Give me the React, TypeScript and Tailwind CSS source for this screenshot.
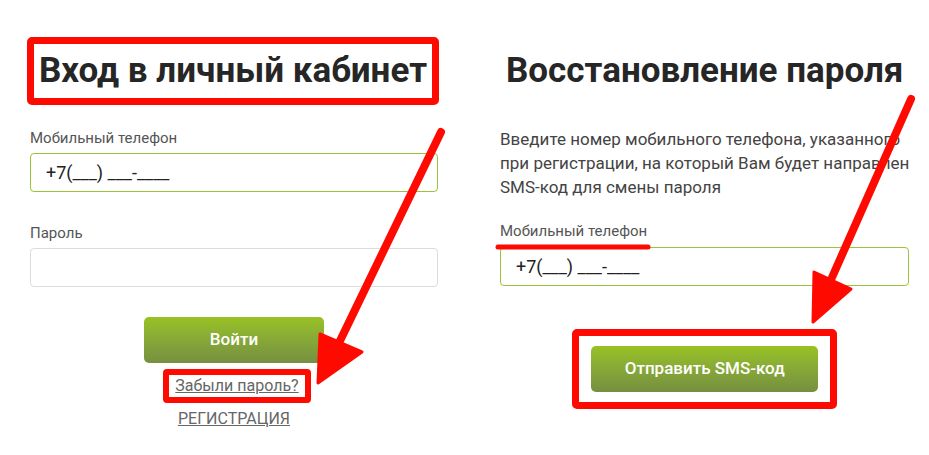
import React from 'react';

const font = { fontFamily: 'Roboto, "Noto Sans", Arial, sans-serif' };

function PhoneInput() {
  return (
    <div className="h-[39px] w-full rounded-[4px] border border-[#9cc23a] bg-white pl-[15px] flex items-center text-[18px] text-[#222]">
      +7(___) ___-____
    </div>
  );
}

function GreenButton({ children, className = '' }: { children: React.ReactNode; className?: string }) {
  return (
    <button
      className={`h-[46px] rounded-[5px] bg-gradient-to-b from-[#98c222] to-[#768f40] text-[17px] font-medium text-white ${className}`}
    >
      {children}
    </button>
  );
}

export default function App() {
  return (
    <div className="relative h-[455px] w-[929px] overflow-hidden bg-white" style={font}>
      <div className="flex h-full">
        {/* Login */}
        <div className="w-[463px] pl-[30px] pr-[25px]">
          <div className="mt-[37px] -ml-[3px] w-[412px] rounded-[5px] border-[7px] border-[#ff0a00] py-[5px] text-center">
            <h1 className="text-[35px] leading-[44px] font-bold text-[#262626] whitespace-nowrap">
              Вход в личный кабинет
            </h1>
          </div>

          <label className="mt-[23px] block text-[15px] leading-[20px] text-[#555]">Мобильный телефон</label>
          <div className="mt-[5px]">
            <PhoneInput />
          </div>

          <label className="mt-[31px] block text-[15px] leading-[20px] text-[#555]">Пароль</label>
          <div className="mt-[5px] h-[39px] w-full rounded-[4px] border border-[#dcdcdc] bg-white" />

          <div className="mt-[30px] flex flex-col items-center">
            <GreenButton className="w-[180px]">Войти</GreenButton>
            <div className="mt-[6px] ml-[6px] flex h-[34px] w-[148px] items-center justify-center rounded-[4px] border-[6px] border-[#ff0a00]">
              <a className="text-[16px] text-[#666] underline">Забыли пароль?</a>
            </div>
            <a className="mt-[4px] text-[16px] text-[#666] underline">РЕГИСТРАЦИЯ</a>
          </div>
        </div>

        <div className="w-px bg-[#6b6b6b]" />

        {/* Password recovery */}
        <div className="flex-1 pl-[37px] pr-[20px]">
          <h1 className="mt-[49px] text-center text-[35px] leading-[44px] font-bold text-[#262626] whitespace-nowrap">
            Восстановление пароля
          </h1>
          <p className="mt-[34px] whitespace-nowrap text-[17px] leading-[24px] text-[#444]">
            Введите номер мобильного телефона, указанного
            <br />
            при регистрации, на который Вам будет направлен
            <br />
            SMS-код для смены пароля
          </p>
          <label className="mt-[22px] block text-[15px] leading-[20px] text-[#555]">Мобильный телефон</label>
          <div className="mt-[6px]">
            <PhoneInput />
          </div>
          <div className="mt-[43px] flex justify-center">
            <div className="rounded-[5px] border-[7px] border-[#ff0a00] px-[12px] py-[10px]">
              <GreenButton className="w-[227px]">Отправить SMS-код</GreenButton>
            </div>
          </div>
        </div>
      </div>

      {/* annotation overlay */}
      <svg className="pointer-events-none absolute inset-0" width="929" height="455" viewBox="0 0 929 455">
        <line x1="441" y1="132" x2="338" y2="345" stroke="#ff0a00" strokeWidth="8" strokeLinecap="round" />
        <polygon points="318,383 320,334 362,352" fill="#ff0a00" stroke="#ff0a00" strokeWidth="3" strokeLinejoin="round" />
        <line x1="911" y1="99" x2="830" y2="282" stroke="#ff0a00" strokeWidth="8" strokeLinecap="round" />
        <polygon points="813,322 814,272 851,289" fill="#ff0a00" stroke="#ff0a00" strokeWidth="3" strokeLinejoin="round" />
        <line x1="498" y1="247" x2="648" y2="247" stroke="#ff0a00" strokeWidth="5" strokeLinecap="round" />
      </svg>
    </div>
  );
}
